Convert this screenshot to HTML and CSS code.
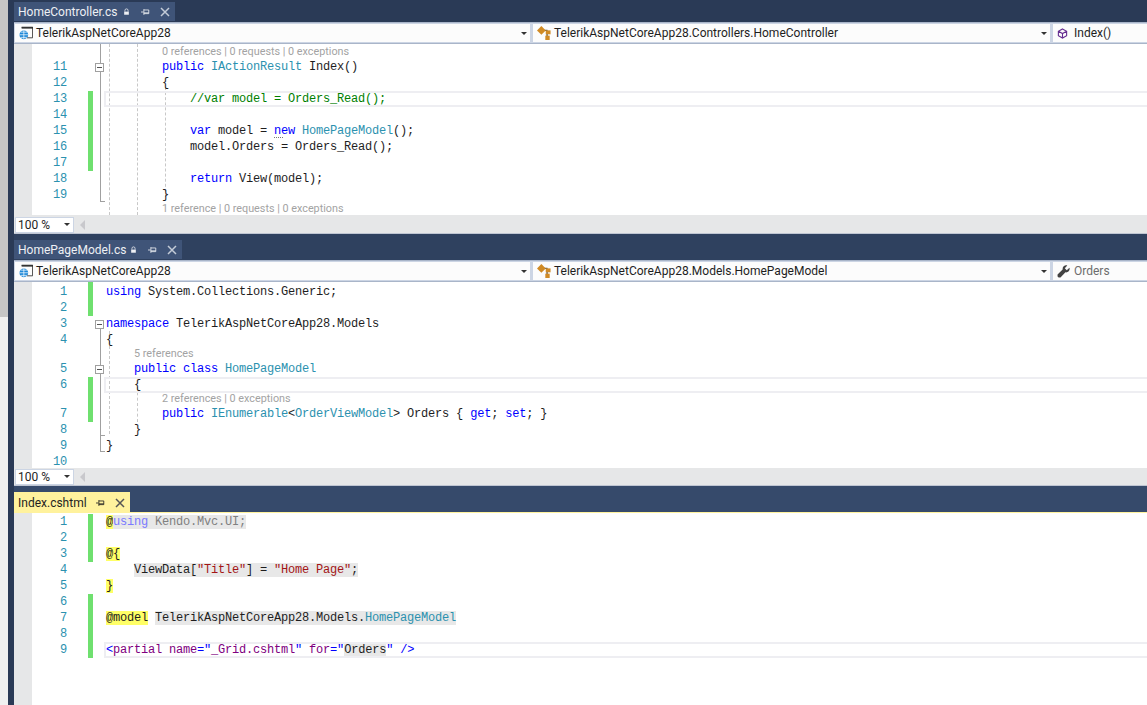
FILE: index.html
```html
<!DOCTYPE html>
<html lang="en">
<head>
  <meta charset="UTF-8" />
  <title>Visual Studio split panes</title>
  <link rel="stylesheet" href="styles.css">
</head>
<body>
  <svg class="defs" width="0" height="0">
    <symbol id="i-keep" viewBox="0 0 9 9"><path d="M2.500 4V2.500a2 2 0 0 1 4 0V4" fill="none" stroke="currentColor"/><path d="M1.500 4h6v4h-6z" fill="currentColor"/></symbol>
    <symbol id="i-pin" viewBox="0 0 11 9"><path d="M0 4.500h3M3.500 1v7M3.500 2h6v4.500h-6M3.500 5.500h6" fill="none" stroke="currentColor"/></symbol>
    <symbol id="i-close" viewBox="0 0 10 10"><path d="M1 1l8 8M9 1l-8 8" fill="none" stroke="currentColor" stroke-width="1.500"/></symbol>
    <symbol id="i-project" viewBox="0 0 16 16"><path d="M3 1.500h12.500v12H9" fill="none" stroke="#333"/><path d="M3 1h13v2H3z" fill="#333"/><circle cx="5.500" cy="10" r="5" fill="#1e88d8"/><path d="M.5 10h10M5.500 5v10M2 7h7M2 13h7" stroke="#fff" stroke-width=".8" fill="none"/></symbol>
    <symbol id="i-class" viewBox="0 0 16 16"><path d="M7 5h5M11.500 5v8" fill="none" stroke="#555" stroke-width="1.500"/><path d="M5 0l5 5-5 5-5-5z" fill="#d08a24"/><path d="M10 5h5.500v4.500H10z" fill="#d08a24"/><path d="M9.500 11h5v5h-5z" fill="#d08a24"/></symbol>
    <symbol id="i-cube" viewBox="0 0 12 12"><path d="M6 1l4.500 2.500v5L6 11 1.500 8.500v-5zM1.500 3.500L6 6l4.500-2.500M6 6v5" fill="none" stroke="#652d90" stroke-width="1.200"/></symbol>
    <symbol id="i-wrench" viewBox="0 0 12 12"><path d="M11.500 2.500L9 4.800 7.200 3 9.500.5C7.500-.2 4.800 1.200 5.200 4.200L.5 8.800V10.500L1.500 11.500h1.700L7.800 6.800C10.800 7.200 12.200 4.500 11.500 2.500z" fill="#424242"/></symbol>
  </svg>

  <div class="side"></div>

  <main class="panes">
    <section class="pane pane-first">
      <div class="tabstrip">
        <div class="tab">
          <span class="tab-name">HomeController.cs</span>
          <svg class="ico-keep"><use href="#i-keep"/></svg>
          <svg class="ico-pin"><use href="#i-pin"/></svg>
          <svg class="ico-close"><use href="#i-close"/></svg>
        </div>
      </div>
      <div class="navbar">
        <div class="combo combo-a"><svg class="ico-16"><use href="#i-project"/></svg><span>TelerikAspNetCoreApp28</span><i class="caret"></i></div>
        <div class="combo combo-b"><svg class="ico-16"><use href="#i-class"/></svg><span>TelerikAspNetCoreApp28.Controllers.HomeController</span><i class="caret"></i></div>
        <div class="combo combo-c"><svg class="ico-cube"><use href="#i-cube"/></svg><span>Index()</span></div>
      </div>
      <div class="editor ed-1">
        <i class="fold-line" style="top:0;height:157px"></i>
        <i class="tick" style="top:157px"></i>
        <i class="guide" style="left:95px;top:0;height:171px"></i>
        <i class="guide" style="left:123px;top:0;height:171px"></i>
        <i class="guide" style="left:151px;top:43px;height:110px"></i>
        <div class="lens"><span>0 references | 0 requests | 0 exceptions</span></div>
        <div class="line"><b class="num">11</b><i class="chg off"></i><i class="fold"><u class="box"></u></i><code>        <s class="k">public</s> <s class="t">IActionResult</s> Index()</code></div>
        <div class="line"><b class="num">12</b><i class="chg off"></i><i class="fold"></i><code>        {</code></div>
        <div class="line current"><b class="num">13</b><i class="chg"></i><i class="fold"></i><code>            <s class="c">//var model = Orders_Read();</s></code></div>
        <div class="line"><b class="num">14</b><i class="chg"></i><i class="fold"></i><code></code></div>
        <div class="line"><b class="num">15</b><i class="chg"></i><i class="fold"></i><code>            <s class="k">var</s> model = <s class="k dotted">new</s> <s class="t">HomePageModel</s>();</code></div>
        <div class="line"><b class="num">16</b><i class="chg"></i><i class="fold"></i><code>            model.Orders = Orders_Read();</code></div>
        <div class="line"><b class="num">17</b><i class="chg"></i><i class="fold"></i><code></code></div>
        <div class="line"><b class="num">18</b><i class="chg off"></i><i class="fold"></i><code>            <s class="k">return</s> View(model);</code></div>
        <div class="line"><b class="num">19</b><i class="chg off"></i><i class="fold"></i><code>        }</code></div>
        <div class="lens lens-tight"><span>1 reference | 0 requests | 0 exceptions</span></div>
      </div>
      <div class="zoombar"><div class="zoom"><span>100 %</span><i class="caret"></i></div><i class="arrow"></i></div>
    </section>

    <section class="pane pane-second">
      <div class="tabstrip">
        <div class="tab">
          <span class="tab-name">HomePageModel.cs</span>
          <svg class="ico-keep"><use href="#i-keep"/></svg>
          <svg class="ico-pin"><use href="#i-pin"/></svg>
          <svg class="ico-close"><use href="#i-close"/></svg>
        </div>
      </div>
      <div class="navbar">
        <div class="combo combo-a"><svg class="ico-16"><use href="#i-project"/></svg><span>TelerikAspNetCoreApp28</span><i class="caret"></i></div>
        <div class="combo combo-b"><svg class="ico-16"><use href="#i-class"/></svg><span>TelerikAspNetCoreApp28.Models.HomePageModel</span><i class="caret"></i></div>
        <div class="combo combo-c muted"><svg class="ico-wrench"><use href="#i-wrench"/></svg><span>Orders</span></div>
      </div>
      <div class="editor ed-2">
        <i class="fold-line" style="top:40px;height:130px"></i>
        <i class="tick" style="top:153px"></i>
        <i class="tick" style="top:169px"></i>
        <i class="guide" style="left:95px;top:49px;height:103px"></i>
        <i class="guide" style="left:123px;top:105px;height:35px"></i>
        <div class="line first"><b class="num">1</b><i class="chg"></i><i class="fold"></i><code><s class="k">using</s> System.Collections.Generic;</code></div>
        <div class="line"><b class="num">2</b><i class="chg"></i><i class="fold"></i><code></code></div>
        <div class="line"><b class="num">3</b><i class="chg off"></i><i class="fold"><u class="box"></u></i><code><s class="k">namespace</s> TelerikAspNetCoreApp28.Models</code></div>
        <div class="line"><b class="num">4</b><i class="chg off"></i><i class="fold"></i><code>{</code></div>
        <div class="lens lens-tight indent-4"><span>5 references</span></div>
        <div class="line"><b class="num">5</b><i class="chg off"></i><i class="fold"><u class="box"></u></i><code>    <s class="k">public</s> <s class="k">class</s> <s class="t">HomePageModel</s></code></div>
        <div class="line current"><b class="num">6</b><i class="chg"></i><i class="fold"></i><code>    {</code></div>
        <div class="lens lens-tight chg-through"><span>2 references | 0 exceptions</span></div>
        <div class="line"><b class="num">7</b><i class="chg"></i><i class="fold"></i><code>        <s class="k">public</s> <s class="t">IEnumerable</s>&lt;<s class="t">OrderViewModel</s>&gt; Orders { <s class="k">get</s>; <s class="k">set</s>; }</code></div>
        <div class="line"><b class="num">8</b><i class="chg off"></i><i class="fold"></i><code>    }</code></div>
        <div class="line"><b class="num">9</b><i class="chg off"></i><i class="fold"></i><code>}</code></div>
        <div class="line last"><b class="num">10</b><i class="chg off"></i><i class="fold"></i><code></code></div>
      </div>
      <div class="zoombar"><div class="zoom"><span>100 %</span><i class="caret"></i></div><i class="arrow"></i></div>
    </section>

    <section class="pane pane-third">
      <div class="tabstrip">
        <div class="tab tab-active">
          <span class="tab-name">Index.cshtml</span>
          <svg class="ico-pin"><use href="#i-pin"/></svg>
          <svg class="ico-close"><use href="#i-close"/></svg>
        </div>
      </div>
      <div class="editor ed-3">
        <div class="line"><b class="num">1</b><i class="chg"></i><i class="fold"></i><code><s class="at">@</s><s class="rz"><s class="kv">using</s> <s class="g">Kendo.Mvc.UI;</s></s></code></div>
        <div class="line"><b class="num">2</b><i class="chg"></i><i class="fold"></i><code></code></div>
        <div class="line"><b class="num">3</b><i class="chg"></i><i class="fold"></i><code><s class="at">@{</s></code></div>
        <div class="line"><b class="num">4</b><i class="chg off"></i><i class="fold"></i><code>    <s class="rz">ViewData[<s class="r">"Title"</s>] = <s class="r">"Home Page"</s>;</s></code></div>
        <div class="line"><b class="num">5</b><i class="chg off"></i><i class="fold"></i><code><s class="at">}</s></code></div>
        <div class="line"><b class="num">6</b><i class="chg"></i><i class="fold"></i><code></code></div>
        <div class="line"><b class="num">7</b><i class="chg"></i><i class="fold"></i><code><s class="at">@model</s> <s class="rz">TelerikAspNetCoreApp28.Models.<s class="t">HomePageModel</s></s></code></div>
        <div class="line"><b class="num">8</b><i class="chg"></i><i class="fold"></i><code></code></div>
        <div class="line current"><b class="num">9</b><i class="chg"></i><i class="fold"></i><code><s class="k">&lt;</s><s class="p">partial name</s><s class="k">="</s><s class="p">_Grid.cshtml</s><s class="k">"</s> <s class="p">for</s><s class="k">="</s><s class="rz">Orders</s><s class="k">" /&gt;</s></code></div>
      </div>
    </section>
  </main>
</body>
</html>
```

FILE: styles.css
```css
html, body {
  height: 100%;
}

body {
  margin: 0;
  display: flex;
  overflow: hidden;
  background-color: #2a3a56;
  font-family: Roboto, "Open Sans", sans-serif;
  font-size: 12px;
  color: #1e1e1e;
}

.defs {
  position: absolute;
}

.side {
  width: 8px;
  flex: none;
  background: linear-gradient(#c6c6c6 317px, #f0f0f0 317px);
}

.panes {
  flex: 1;
  min-width: 0;
  padding-left: 6px;
  display: flex;
  flex-direction: column;
  height: 705px;
}

.pane {
  display: flex;
  flex-direction: column;
}

/* tabs */
.tabstrip {
  padding-top: 2px;
  padding-bottom: 1px;
  height: 22px;
  display: flex;
  box-sizing: border-box;
}

.pane-first {
  background-color: #2a3a56;
}

.pane-second {
  background-color: #2f415f;
}

.pane-second .tabstrip {
  height: 26px;
  padding-top: 6px;
}

.pane-second .tab-name {
  margin-right: 4px;
}

.pane-third {
  flex: 1;
  background-color: #364a6b;
}

.pane-third .tabstrip {
  height: 27px;
  padding-top: 6px;
  padding-bottom: 0;
  border-bottom: 1px solid #fff29d;
}

.tab {
  display: flex;
  align-items: center;
  padding: 1px 5px 0 4px;
  background-color: #3f5478;
  color: #eef0f4;
}

.tab-active {
  background-color: #fff29d;
  color: #1e1e1e;
}

.tab-name {
  margin-right: 6px;
}

.tab-active .tab-name {
  margin-right: 9px;
}

.tab svg {
  flex: none;
}

.ico-keep {
  width: 7px;
  height: 8px;
  margin-right: 11px;
}

.ico-pin {
  width: 9px;
  height: 8px;
  margin-right: 10px;
}

.ico-close {
  width: 10px;
  height: 10px;
}

.tab .ico-close {
  color: #c4ccd8;
}

.tab-active .ico-close {
  color: #555;
}

/* navigation bar */
.navbar {
  height: 22px;
  display: flex;
  gap: 3px;
  padding: 1px 0 1px 1px;
  box-sizing: border-box;
  background-color: #ccd5e4;
  border-top: 1px solid #a9b5c9;
  border-bottom: 1px solid #a9b5c9;
  align-items: stretch;
}

.combo {
  display: flex;
  align-items: center;
  background-color: #fcfcfc;
  padding-left: 4px;
  min-width: 0;
  box-sizing: border-box;
}

.combo-a {
  width: 515px;
  flex: none;
}

.combo-b {
  width: 517px;
  flex: none;
}

.combo-c {
  flex: 1;
}

.combo span {
  margin-left: 3px;
  white-space: nowrap;
}

.muted span {
  color: #6d6d6d;
}

.ico-16 {
  width: 14px;
  height: 14px;
  flex: none;
}

.ico-cube {
  width: 11px;
  height: 11px;
  flex: none;
  margin-right: 3px;
}

.ico-wrench {
  width: 13px;
  height: 13px;
  flex: none;
  margin-right: 1px;
}

.caret {
  width: 0;
  height: 0;
  margin-left: auto;
  margin-right: 3px;
  border-left: 3px solid transparent;
  border-right: 3px solid transparent;
  border-top: 3px solid #333;
}

/* code */
.editor {
  position: relative;
  background-color: #fff;
  overflow: hidden;
  background-image: linear-gradient(#e6e7e8, #e6e7e8);
  background-size: 18px 100%;
  background-repeat: no-repeat;
}

.ed-1 {
  height: 171px;
}

.ed-2 {
  height: 186px;
}

.ed-3 {
  flex: 1;
  padding-top: 1px;
}

.line,
.lens {
  display: flex;
  height: 16px;
  position: relative;
}

.line.first {
  height: 18px;
}

.first code,
.first .num {
  margin-top: 2px;
}

.line.last {
  height: 14px;
}

.last .num {
  margin-top: 2px;
  line-height: 12px;
}

.lens {
  height: 15px;
  padding-left: 148px;
  align-items: center;
  box-sizing: border-box;
}

.lens-tight {
  height: 13px;
  padding-bottom: 2px;
}

.indent-4 {
  padding-left: 120px;
}

.lens span {
  font-size: 10.800px;
  color: #a3a3a3;
}

.chg-through::before {
  content: "";
  position: absolute;
  left: 74px;
  top: 0;
  bottom: 0;
  width: 5px;
  background-color: #6fe06f;
}

code {
  font-family: "Liberation Mono", "DejaVu Sans Mono", monospace;
  font-size: 12px;
  letter-spacing: -0.2px;
  line-height: 16px;
  white-space: pre;
  color: #1e1e1e;
}

.num {
  width: 53px;
  flex: none;
  text-align: right;
  font-family: "Liberation Mono", monospace;
  font-size: 12px;
  font-weight: normal;
  letter-spacing: -0.2px;
  line-height: 16px;
  color: #2b91af;
}

.chg {
  width: 5px;
  flex: none;
  margin-left: 21px;
  background-color: #6fe06f;
}

.chg.off {
  background-color: transparent;
}

.fold {
  width: 13px;
  flex: none;
  position: relative;
}

.box {
  position: absolute;
  left: 2px;
  top: 4px;
  width: 7px;
  height: 7px;
  background-color: #fff;
  border: 1px solid #a0a0a0;
  background-image: linear-gradient(#555, #555);
  background-size: 5px 1px;
  background-position: center;
  background-repeat: no-repeat;
  z-index: 1;
}

.fold-line {
  position: absolute;
  left: 86px;
  width: 1px;
  background-color: #a0a0a0;
}

.tick {
  position: absolute;
  left: 86px;
  width: 5px;
  height: 1px;
  background-color: #a0a0a0;
}

.guide {
  position: absolute;
  width: 0;
  border-left: 1px dashed #c8c8c8;
}

.current::after {
  content: "";
  position: absolute;
  left: 90px;
  right: 0;
  top: 0;
  bottom: 0;
  border: 2px solid #eeeef2;
  border-right: 0;
  pointer-events: none;
}

s {
  text-decoration: none;
}

.k { color: #0000ff; }
.t { color: #2b91af; }
.c { color: #008000; }
.r { color: #a31515; }
.p { color: #800080; }
.g { color: #808080; }
.kv { color: #7a7aff; }
.at { background-color: #ffff66; }
.rz { background-color: #e8e8e8; }

.dotted {
  background: repeating-linear-gradient(90deg, #777 0 1px, transparent 1px 2px) 0 100% / 10px 1px no-repeat;
}

/* zoom row */
.zoombar {
  height: 19px;
  padding-top: 1px;
  display: flex;
  align-items: center;
  background-color: #e6e7e8;
  border-bottom: 1px solid #bfc5d2;
  box-sizing: border-box;
}

.pane-second .zoombar {
  height: 18px;
  padding-top: 0;
}

.zoom {
  width: 59px;
  height: 16px;
  margin-left: 1px;
  display: flex;
  align-items: center;
  background-color: #fff;
  border: 1px solid #ccd5e4;
  box-sizing: border-box;
  padding-left: 2px;
}

.arrow {
  width: 0;
  height: 0;
  margin-left: 6px;
  border-top: 5px solid transparent;
  border-bottom: 5px solid transparent;
  border-right: 5px solid #c8c8cc;
}
```
